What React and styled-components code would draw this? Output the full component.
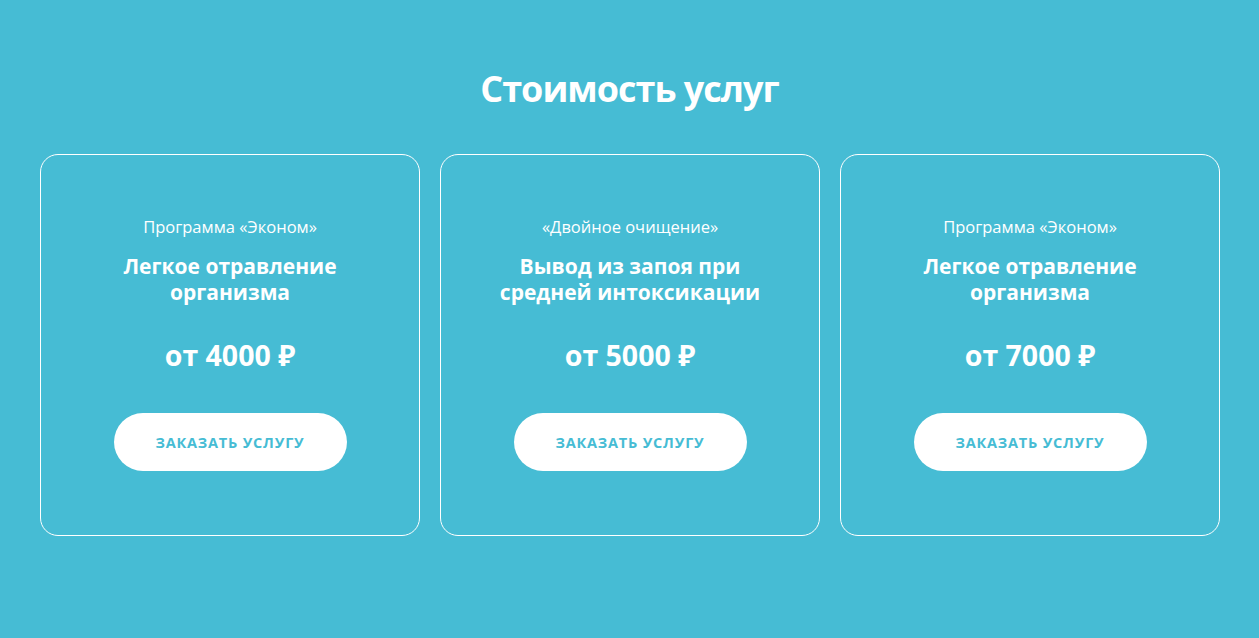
import React from 'react';
import styled, {createGlobalStyle} from 'styled-components';

const GlobalStyle = createGlobalStyle`
  html, body {
    margin: 0;
    padding: 0;
    background: #46bcd4;
  }
  body {
    font-family: "Open Sans", "Noto Sans", sans-serif;
    color: #fff;
  }
`;

const plans = [
  {label: 'Программа «Эконом»', name: ['Легкое отравление', 'организма'], price: 'от 4000 ₽'},
  {label: '«Двойное очищение»', name: ['Вывод из запоя при', 'средней интоксикации'], price: 'от 5000 ₽'},
  {label: 'Программа «Эконом»', name: ['Легкое отравление', 'организма'], price: 'от 7000 ₽'},
];

const App = () => {
  return (
    <Section>
      <GlobalStyle/>
      <Title>Стоимость услуг</Title>
      <Grid>
        {plans.map((plan, i) => (
          <Card key={i}>
            <Label>{plan.label}</Label>
            <Name>
              {plan.name[0]}<br/>{plan.name[1]}
            </Name>
            <Price>{plan.price}</Price>
            <Button>Заказать услугу</Button>
          </Card>
        ))}
      </Grid>
    </Section>
  )
}

export default App;

const Section = styled.section`
  height: 638px;
  box-sizing: border-box;
  padding: 62px 40px 0;
  background: #46bcd4;
`;

const Title = styled.h2`
  margin: 0;
  text-align: center;
  font-size: 36px;
  line-height: 54px;
  font-weight: 700;
  letter-spacing: -1px;
`;

const Grid = styled.div`
  display: grid;
  grid-template-columns: repeat(3, 380px);
  gap: 20px;
  margin-top: 38px;
`;

const Card = styled.div`
  box-sizing: border-box;
  height: 382px;
  border: 1px solid #fff;
  border-radius: 18px;
  padding: 62px 30px 0;
  display: flex;
  flex-direction: column;
  align-items: center;
  text-align: center;
`;

const Label = styled.div`
  font-size: 16.5px;
  line-height: 20px;
`;

const Name = styled.div`
  margin-top: 16px;
  font-size: 21px;
  line-height: 26px;
  font-weight: 700;
`;

const Price = styled.div`
  margin-top: 33px;
  font-size: 28.5px;
  line-height: 34px;
  font-weight: 700;
`;

const Button = styled.div`
  margin-top: 41px;
  width: 233px;
  height: 58px;
  border-radius: 29px;
  background: #fff;
  color: #46bcd4;
  display: flex;
  align-items: center;
  justify-content: center;
  font-size: 14.5px;
  font-weight: 700;
  text-transform: uppercase;
  letter-spacing: 0.8px;
  cursor: pointer;
`;
